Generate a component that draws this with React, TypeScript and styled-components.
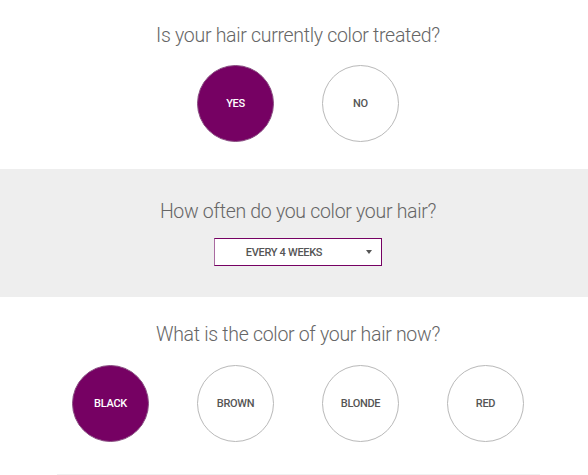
import React, { useState } from "react";
import styled, { createGlobalStyle } from "styled-components";

const PURPLE = "#760163";

const Global = createGlobalStyle`
  html, body { margin: 0; padding: 0; background: #fff; }
  body { font-family: Roboto, "Noto Sans", sans-serif; -webkit-font-smoothing: antialiased; }
`;

const Page = styled.div`
  width: 588px;
  height: 475px;
  overflow: hidden;
  display: flex;
  flex-direction: column;
`;

const Section = styled.section<{ $gray?: boolean; $pt: number; $pb: number }>`
  background: ${(p) => (p.$gray ? "#eeeeee" : "#ffffff")};
  padding: ${(p) => p.$pt}px 0 ${(p) => p.$pb}px 8px;
  display: flex;
  flex-direction: column;
  align-items: center;
`;

const Heading = styled.h2<{ $mb: number }>`
  margin: 0 0 ${(p) => p.$mb}px;
  font-family: "Roboto Light", Roboto, sans-serif;
  font-weight: 300;
  font-size: 19.5px;
  letter-spacing: -0.3px;
  line-height: 25px;
  color: #666;
  text-align: center;
`;

const Options = styled.div`
  display: flex;
  justify-content: center;
`;

const Circle = styled.button<{ $active?: boolean }>`
  width: 77px;
  height: 77px;
  margin: 0 24px;
  border-radius: 50%;
  border: 1px solid ${(p) => (p.$active ? "#8a4f82" : "#b9b9b9")};
  background: ${(p) => (p.$active ? PURPLE : "#fff")};
  color: ${(p) => (p.$active ? "#fff" : "#555")};
  font-family: Roboto, sans-serif;
  font-weight: 500;
  font-size: 11px;
  letter-spacing: -0.3px;
  text-transform: uppercase;
  display: flex;
  align-items: center;
  justify-content: center;
  padding: 0;
  cursor: pointer;
`;

const Select = styled.div`
  position: relative;
  width: 166px;
  height: 26px;
  border: 1px solid ${PURPLE};
  border-left-color: #a96aa0;
  background: #fff;
  display: flex;
  align-items: center;
  justify-content: center;
  font-family: Roboto, sans-serif;
  font-weight: 500;
  font-size: 11px;
  letter-spacing: -0.3px;
  color: #555;
  box-sizing: content-box;
`;

const Arrow = styled.span`
  position: absolute;
  right: 9px;
  top: 11px;
  width: 0;
  height: 0;
  border-left: 3px solid transparent;
  border-right: 3px solid transparent;
  border-top: 4px solid #555;
`;

const SelectText = styled.span`
  margin-left: -28px;
`;

const BottomLine = styled.div`
  margin: 32px 48px 0 57px;
  height: 1px;
  background: #f0f0f0;
`;

export default function App() {
  const [treated, setTreated] = useState("yes");
  const [color, setColor] = useState("black");
  return (
    <>
      <Global />
      <Page>
        <Section $pt={23} $pb={27}>
          <Heading $mb={17}>Is your hair currently color treated?</Heading>
          <Options>
            {["yes", "no"].map((o) => (
              <Circle key={o} $active={treated === o} onClick={() => setTreated(o)}>
                {o}
              </Circle>
            ))}
          </Options>
        </Section>
        <Section $gray $pt={30} $pb={31}>
          <Heading $mb={14}>How often do you color your hair?</Heading>
          <Select>
            <SelectText>EVERY 4 WEEKS</SelectText>
            <Arrow />
          </Select>
        </Section>
        <Section $pt={25} $pb={0}>
          <Heading $mb={18}>What is the color of your hair now?</Heading>
          <Options>
            {["black", "brown", "blonde", "red"].map((o) => (
              <Circle key={o} $active={color === o} onClick={() => setColor(o)}>
                {o}
              </Circle>
            ))}
          </Options>
        </Section>
        <BottomLine />
      </Page>
    </>
  );
}
